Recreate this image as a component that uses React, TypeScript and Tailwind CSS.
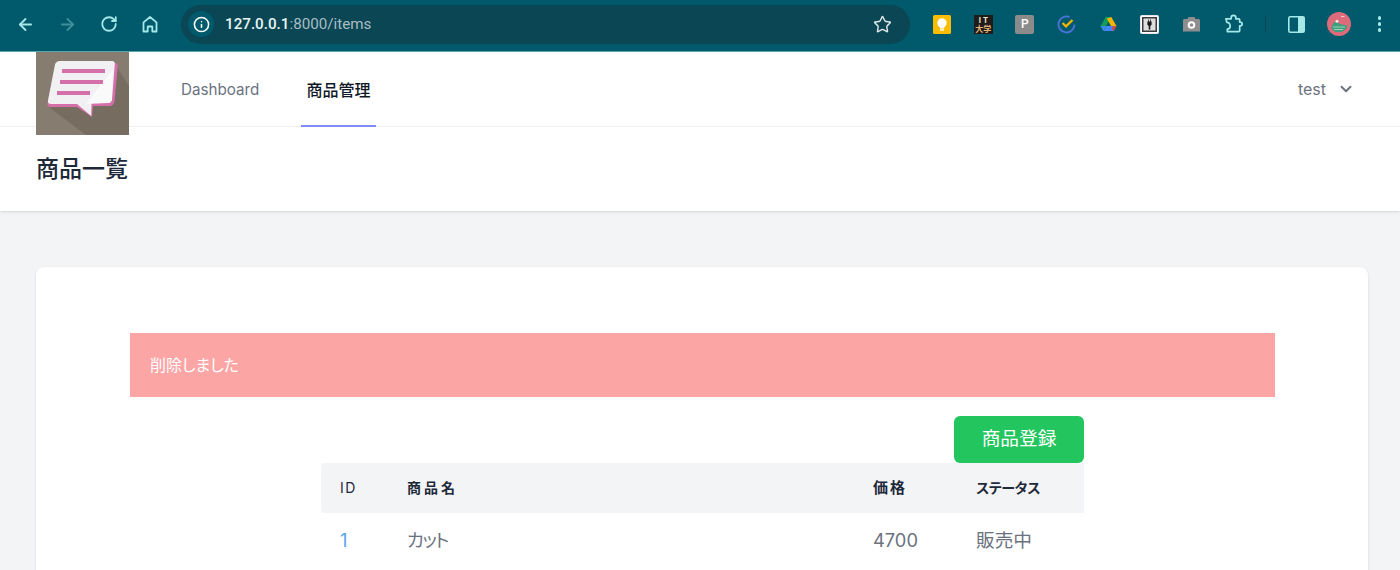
import { ArrowLeft, ArrowRight, RotateCw, Info, Star, ChevronDown } from 'lucide-react';

function HomeIcon() {
  return (
    <svg width="18" height="18" viewBox="0 0 18 18" fill="none" stroke="#a5e8e8" strokeWidth="1.8" strokeLinejoin="round">
      <path d="M2.500 7.400 9 2l6.500 5.400V16.500h-4.200v-5H6.700v5H2.500z" />
    </svg>
  );
}

function KeepIcon() {
  return (
    <svg width="18" height="19" viewBox="0 0 18 19">
      <rect width="18" height="19" rx="1.5" fill="#fbbc04" />
      <circle cx="9" cy="8" r="4.700" fill="#fff" />
      <rect x="6.800" y="11.500" width="4.400" height="2" fill="#fff" />
      <rect x="7" y="14.200" width="4" height="1.400" fill="#fff" />
    </svg>
  );
}

function TickIcon() {
  return (
    <svg width="19" height="19" viewBox="0 0 19 19" fill="none">
      <path d="M12.500 2A8 8 0 1 0 17.500 9.500" stroke="#4a72d8" strokeWidth="1.900" />
      <path d="M5.500 8l3.500 3.400 6.500-6.400" stroke="#f4b400" strokeWidth="2.300" />
    </svg>
  );
}

function DriveIcon() {
  return (
    <svg width="17" height="16" viewBox="0 0 17 16">
      <path d="M5.700 1h5.600L6 10H.5z" fill="#0f9d58" />
      <path d="M11.300 1l5.200 9H11L6.800 2.500z" fill="#f4b400" />
      <path d="M16.500 10l-2.800 5H3.300l2.800-5z" fill="#4285f4" />
      <path d="M.5 10h5.600l-2.800 5z" fill="#3b8ee8" />
      <path d="M13.700 15l2.800-5h-3.200l-1.500 2.600z" fill="#db4437" />
    </svg>
  );
}

function PlugIcon() {
  return (
    <svg width="19" height="19" viewBox="0 0 19 19">
      <rect x="0.500" y="0.500" width="18" height="18" rx="1" fill="#fff" stroke="#e4e4e4" />
      <rect x="2" y="2" width="15" height="15" fill="#3a3a3a" />
      <rect x="3.500" y="3.500" width="12" height="12" fill="#dedede" />
      <path d="M8.200 4.500h.7v2h1.200v-2h.7v2h.8v3.300l-1.300 1.300v3.400H8.700v-3.400L7.400 9.800V6.500h.8z" fill="#1a1a1a" />
    </svg>
  );
}

function CameraIcon() {
  return (
    <svg width="17" height="16" viewBox="0 0 17 16">
      <path d="M0 4.500C0 3.700.6 3 1.400 3H4.500l1-2h6l1 2h3.100c.8 0 1.400.7 1.400 1.500V15.500H0z" fill="#8e8e8e" />
      <circle cx="8.500" cy="9" r="3.800" fill="#fff" />
      <circle cx="8.500" cy="9" r="1.800" fill="#8e8e8e" />
    </svg>
  );
}

function PuzzleIcon() {
  return (
    <svg width="20" height="20" viewBox="0 0 20 20" fill="none" stroke="#a5e8e8" strokeWidth="1.800" strokeLinejoin="round">
      <path d="M2 4.500H7.500V3.500a2.500 2.500 0 0 1 5 0V4.500H15.500a1 1 0 0 1 1 1V8h.6a2 2 0 0 1 0 4h-.6v5a1 1 0 0 1-1 1H3.500V15.500c2 0 3-1.800 3-3.700S5 8.200 3 8.200z" />
    </svg>
  );
}

function SidePanelIcon() {
  return (
    <svg width="17" height="17" viewBox="0 0 17 17">
      <rect x="0.800" y="0.800" width="15.400" height="15.400" rx="1.500" fill="none" stroke="#a5e8e8" strokeWidth="1.600" />
      <rect x="10" y="1" width="6.200" height="15" fill="#a5e8e8" />
    </svg>
  );
}

function AvatarIcon() {
  return (
    <svg width="24" height="24" viewBox="0 0 24 24">
      <circle cx="12" cy="12" r="12" fill="#dd6b7b" />
      <path d="M4 16c1-3 3-6 5-7l4 3 7 1.500v2.500l-5 4H8z" fill="#3f9e7c" />
      <path d="M8 9.500l2-2 2 2-2 1.500zM14 4h3.500v.8H14z" fill="#f3ece2" />
      <path d="M6 15h12M7 17.500h9" stroke="#a6d8c0" strokeWidth="0.900" />
    </svg>
  );
}

function LogoGraphic() {
  return (
    <svg width="93" height="83" viewBox="0 0 93 83" className="block">
      <rect width="93" height="83" fill="#867c6f" />
      <path d="M14 56 50 83h43V34L79 12z" fill="#766d60" />
      <path d="M23 11h56c2 0 3 1 2.700 3.500L78.500 49c-.3 3-2.500 5-5 5H57l-1 11L41 55H15c-3 0-4-2-3.500-4L19 14c.5-2 2-3 4-3z" fill="#d56fa9" />
      <path d="M24 9h52c2 0 3 1 2.800 3L76 47c-.2 2.500-2 4-4 4H55.500l-.3 13L41 52H15c-2.500 0-3.500-1.500-3-3.500L19 12.500C19.500 10.500 21.500 9 24 9z" fill="#f1f1f4" />
      <path d="M50 52 76.500 18 76 47c-.2 2.500-2 4-4 4z" fill="#fafafb" />
      <path d="M26 19h43M24 30h43M21 41h33" stroke="#d56fa9" strokeWidth="4" />
    </svg>
  );
}

const extensionBox = 'flex w-[19px] justify-center';

export default function App() {
  return (
    <div className="h-[570px] overflow-hidden bg-[#f3f4f6] font-['Inter','Noto_Sans_CJK_JP',sans-serif]">
      {/* Browser toolbar */}
      <div className="flex h-[52px] items-center border-b border-[#5fa3ae] bg-[#015a6c] pb-[3px] pl-4">
        <div className="flex w-[165px] items-center gap-[23px]">
          <ArrowLeft size={19} color="#a5e8e8" strokeWidth={2.4} />
          <ArrowRight size={19} color="#3f8f99" strokeWidth={2.4} />
          <RotateCw size={18} color="#a5e8e8" strokeWidth={2.4} />
          <HomeIcon />
        </div>
        <div className="flex h-[39px] w-[729px] items-center justify-between rounded-full bg-[#0a4654] pr-[18px] pl-[7px]">
          <div className="flex items-center gap-[11px]">
            <div className="flex h-[26px] w-[26px] items-center justify-center rounded-full bg-[#015a6c]">
              <Info size={17} color="#ffffff" strokeWidth={2.2} />
            </div>
            <span className="font-['Roboto','Noto_Sans_CJK_JP',sans-serif] text-[15.2px] text-[#a9bdc3]">
              <span className="font-medium text-[#e8f4f4]">127.0.0.1</span>:8000/items
            </span>
          </div>
          <Star size={19} color="#dfe7e8" strokeWidth={1.8} />
        </div>
        <div className="ml-[22px] flex items-center gap-[22.7px]">
          <div className={extensionBox}>
            <KeepIcon />
          </div>
          <div className="flex h-[19px] w-[19px] flex-col items-center justify-center bg-[#1f1c1c] font-['Noto_Sans_CJK_JP',sans-serif] text-[8px] leading-[9px] font-bold text-[#e8b777]">
            <span className="text-[#efe2c6]">I T</span>
            <span>大学</span>
          </div>
          <div className="flex h-[19px] w-[19px] items-center justify-center rounded-[2px] bg-[#8b8b8b] font-['Roboto',sans-serif] text-xs font-medium text-white">
            P
          </div>
          <div className={extensionBox}>
            <TickIcon />
          </div>
          <div className={extensionBox}>
            <DriveIcon />
          </div>
          <div className={extensionBox}>
            <PlugIcon />
          </div>
          <div className={extensionBox}>
            <CameraIcon />
          </div>
          <div className={extensionBox}>
            <PuzzleIcon />
          </div>
        </div>
        <div className="ml-[22px] h-[18px] w-px bg-[#0a4654]" />
        <div className="ml-[22px] flex items-center">
          <SidePanelIcon />
          <div className="ml-[22px]">
            <AvatarIcon />
          </div>
          <div className="ml-[27px] flex flex-col gap-[2.500px]">
            <span className="h-[3.500px] w-[3.500px] rounded-full bg-[#a5e8e8]" />
            <span className="h-[3.500px] w-[3.500px] rounded-full bg-[#a5e8e8]" />
            <span className="h-[3.500px] w-[3.500px] rounded-full bg-[#a5e8e8]" />
          </div>
        </div>
      </div>

      {/* App nav */}
      <nav className="flex h-[75px] border-b border-gray-100 bg-white pr-[45px] pl-9">
        <div className="h-[83px] w-[93px] shrink-0">
          <LogoGraphic />
        </div>
        <div className="ml-[52px] flex gap-[42px]">
          <a className="flex w-[78px] items-center pt-0.5 text-[15.2px] text-[#6b7280]">Dashboard</a>
          <a className="-mb-px flex w-[75px] items-center justify-center border-b-2 border-[#818cf8] pt-0.5 text-base font-medium text-gray-900">
            商品管理
          </a>
        </div>
        <div className="ml-auto flex items-center gap-[11px] text-base text-[#6b7280]">
          test
          <ChevronDown size={18} strokeWidth={2.6} />
        </div>
      </nav>

      {/* Page heading */}
      <header className="flex h-[84px] items-center bg-white px-9 shadow">
        <h2 className="text-[23px] font-medium text-gray-800">商品一覧</h2>
      </header>

      {/* Content */}
      <main className="pt-14 pr-8 pl-9">
        <div className="h-[400px] rounded-lg bg-white pt-[66px] pr-[93px] pl-[94px] shadow-sm">
          <div className="flex h-16 items-center bg-[#fca5a5] px-5 pb-px text-base text-white [font-feature-settings:'palt']">
            削除しました
          </div>
          <div className="mt-[19px] ml-[191px] w-[763px]">
            <div className="flex justify-end">
              <button className="h-[47px] w-[130px] rounded-md bg-[#22c55e] text-[18.700px] text-white">商品登録</button>
            </div>
            <table className="w-full">
              <thead className="bg-[#f3f4f6]">
                <tr className="h-[50px] text-left text-sm text-gray-800">
                  <th className="w-[86px] rounded-l pl-[19px] font-normal tracking-[1.5px]">ID</th>
                  <th className="w-[466px] font-semibold tracking-[3px]">商品名</th>
                  <th className="w-[103px] text-[15px] font-semibold tracking-[2px]">価格</th>
                  <th className="font-semibold tracking-[-0.3px] [font-feature-settings:'palt']">ステータス</th>
                </tr>
              </thead>
              <tbody>
                <tr className="h-[54px] text-[18.300px] text-[#6b7280]">
                  <td className="pt-0.5 pl-[19px] text-[#55a5ee]">1</td>
                  <td className="pt-0.5 tracking-[-1.5px] [font-feature-settings:'palt']">カット</td>
                  <td className="pt-0.5">4700</td>
                  <td className="pt-0.5 text-[18.700px]">販売中</td>
                </tr>
              </tbody>
            </table>
          </div>
        </div>
      </main>
    </div>
  );
}
